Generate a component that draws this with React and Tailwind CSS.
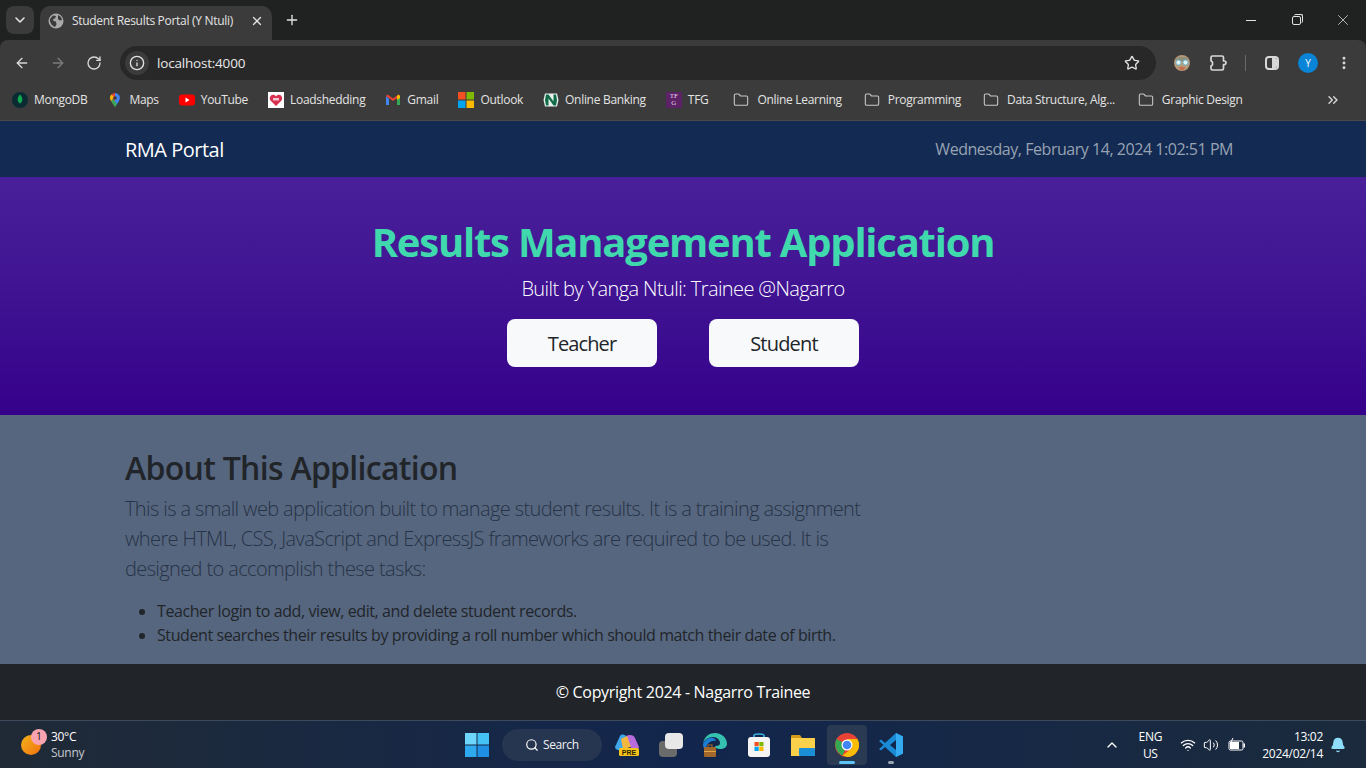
import React from "react";
import {
  ArrowLeft,
  ArrowRight,
  RotateCw,
  Info,
  Star,
  EllipsisVertical,
  ChevronDown,
  ChevronUp,
  ChevronsRight,
  Plus,
  X,
  Folder,
  Search,
  Wifi,
  Volume2,
  Bell,
} from "lucide-react";

const Bookmark = ({ icon, label, className = "", gap = "gap-1.5" }) => (
  <div className={`flex items-center ${gap} text-xs tracking-[-0.3px] text-[#e3e3e3] ${className}`}>
    <span className="flex h-4 w-4 items-center justify-center">{icon}</span>
    <span>{label}</span>
  </div>
);

const FolderIcon = () => <Folder className="h-4 w-4 text-[#c7c7c7]" strokeWidth={1.6} />;

const MongoIcon = () => (
  <svg viewBox="0 0 16 16" className="h-4 w-4">
    <circle cx="8" cy="8" r="8" fill="#0b2b33" />
    <path d="M8 2.500c2 2.200 2.600 4 2.200 6-.3 1.400-1.200 2.400-2.200 3-1-.6-1.900-1.600-2.200-3-.4-2 .2-3.800 2.200-6z" fill="#12a84f" />
  </svg>
);

const MapsIcon = () => (
  <svg viewBox="0 0 16 16" className="h-4 w-4">
    <path d="M8 1a5 5 0 0 0-4 8l4 6z" fill="#ea4335" />
    <path d="M8 1a5 5 0 0 1 4 8L8 15z" fill="#4285f4" />
    <path d="M4 9l4 6 2-3-4-5z" fill="#34a853" />
    <path d="M3 6a5 5 0 0 1 1.500-3.500L7 5 4 9z" fill="#fbbc04" />
    <circle cx="8" cy="6" r="1.800" fill="#3b3b3b" />
  </svg>
);

const YoutubeIcon = () => (
  <svg viewBox="0 0 16 16" className="h-4 w-4">
    <rect x="0" y="2.500" width="16" height="11" rx="3" fill="#f00" />
    <path d="M6.500 5.500l4 2.500-4 2.500z" fill="#fff" />
  </svg>
);

const LoadIcon = () => (
  <svg viewBox="0 0 16 16" className="h-4 w-4">
    <rect width="16" height="16" fill="#fff" />
    <path d="M8 14L2.500 8.500C.8 6 2.500 2.800 5 2.800c1.300 0 2.300.6 3 1.600.7-1 1.700-1.600 3-1.600 2.500 0 4.200 3.200 2.500 5.700z" fill="#d9304f" />
    <rect x="5" y="6" width="6" height="2.500" fill="#f7c5cf" />
  </svg>
);

const GmailIcon = () => (
  <svg viewBox="0 0 16 16" className="h-4 w-4">
    <path d="M1 4v9h3V7z" fill="#4285f4" />
    <path d="M15 4v9h-3V7z" fill="#34a853" />
    <path d="M1 4l7 5 7-5-1.500-1.500L8 6.500 2.500 2.500z" fill="#ea4335" />
    <path d="M12 4l1.500-1.500L15 4v2l-3 2z" fill="#fbbc04" />
  </svg>
);

const MicrosoftIcon = () => (
  <svg viewBox="0 0 16 16" className="h-4 w-4">
    <rect width="7.500" height="7.500" fill="#f25022" />
    <rect x="8.500" width="7.500" height="7.500" fill="#7fba00" />
    <rect y="8.500" width="7.500" height="7.500" fill="#00a4ef" />
    <rect x="8.500" y="8.500" width="7.500" height="7.500" fill="#ffb900" />
  </svg>
);

const NedbankIcon = () => (
  <svg viewBox="0 0 16 16" className="h-4 w-4">
    <path d="M2 1.500h12l1.500 6.500-1.500 6.500H2L.5 8z" fill="#e8f1ec" />
    <path d="M3 2.500h2.500l5 7v-7H13l1 5.500-1 5.500h-2.500l-5-7v7H3L2 8z" fill="#0f6b48" />
  </svg>
);

const TfgIcon = () => (
  <span className="flex h-4 w-4 flex-col items-center justify-center bg-[#5b2366] font-['Liberation_Serif',serif] text-[7px] leading-[7px] tracking-normal text-[#e6d8ea]">
    <span>TF</span>
    <span>G</span>
  </span>
);

const GlobeFilled = () => (
  <svg viewBox="0 0 16 16" className="h-4 w-4">
    <circle cx="8" cy="8" r="7.500" fill="#a9a9a9" />
    <path d="M2 6l3-3.500 3 .5-1 2.500-2 .5.500 2 2.500.5.500 3-1.500 2.500C4 13 1.500 9.500 2 6zM10 2l3 2 1 3-2.500.5L10 6z" fill="#3b3b3b" />
  </svg>
);

const ExtensionIcon = () => (
  <svg viewBox="0 0 18 18" className="h-[18px] w-[18px]" fill="none" stroke="#d8d8d8" strokeWidth="1.700" strokeLinejoin="round">
    <path d="M3.500 2h9.500a1.500 1.500 0 0 1 1.500 1.500V7h.7a1.800 1.800 0 0 1 0 3.600h-.7v3.900a1.500 1.500 0 0 1-1.500 1.500H3.500A1.500 1.500 0 0 1 2 14.500V12a2.200 2.200 0 0 0 1.500-2.500A2.200 2.200 0 0 0 2 7V3.500A1.500 1.500 0 0 1 3.500 2z" />
  </svg>
);

const ChromeBar = () => (
  <div className="flex h-10 items-end bg-[#202121]">
    <div className="mb-1.5 ml-1.5 flex h-7 w-7 items-center justify-center rounded-lg bg-[#3b3b3b]">
      <ChevronDown className="h-4 w-4 text-[#e3e3e3]" strokeWidth={2.4} />
    </div>
    <div className="ml-1.5 flex h-[34px] w-[232px] items-center rounded-t-[10px] bg-[#3b3b3b] pb-1 pl-2 pr-2">
      <GlobeFilled />
      <span className="ml-2 flex-1 text-xs tracking-[-0.3px] text-[#e3e3e3]">Student Results Portal (Y Ntuli)</span>
      <X className="h-3.5 w-3.5 text-[#e3e3e3]" strokeWidth={2.2} />
    </div>
    <Plus className="mb-3 ml-3 h-4 w-4 text-[#e3e3e3]" strokeWidth={2} />
    <div className="mb-[11px] ml-auto flex items-center">
      <span className="mr-[36px] h-px w-[10px] bg-[#e3e3e3]" />
      <span className="relative mr-[33px] mt-px h-[9px] w-[9px] rounded-[2px] border border-[#e3e3e3]">
        <span className="absolute -right-[3px] -top-[3px] h-[9px] w-[9px] rounded-[2px] border-r border-t border-[#e3e3e3]" />
      </span>
      <X className="mr-[14px] h-[18px] w-[18px] text-[#e3e3e3]" strokeWidth={1} />
    </div>
  </div>
);

const AddressBar = () => (
  <div className="flex h-[41px] items-start rounded-t-lg bg-[#3b3b3b] pl-3.5 pr-3 pt-1.5">
    <div className="flex h-[34px] items-center">
      <ArrowLeft className="h-4 w-4 text-[#d8d8d8]" strokeWidth={2} />
      <ArrowRight className="ml-5 h-4 w-4 text-[#7c7c7c]" strokeWidth={2} />
      <RotateCw className="ml-5 h-4 w-4 text-[#d8d8d8]" strokeWidth={2} />
      <div className="ml-[18px] flex h-[34px] w-[1036px] items-center rounded-full bg-[#282828] pl-[5px] pr-4">
        <span className="flex h-6 w-6 items-center justify-center rounded-full bg-[#3b3b3b]">
          <Info className="h-4 w-4 text-[#e3e3e3]" strokeWidth={2} />
        </span>
        <span className="ml-2 text-[13.5px] tracking-[-0.2px] text-[#e8e8e8]">localhost:4000</span>
        <Star className="ml-auto h-4 w-4 text-[#e3e3e3]" strokeWidth={2} />
      </div>
      <svg viewBox="0 0 18 18" className="ml-[17px] h-[18px] w-[18px]">
        <circle cx="9" cy="9" r="8" fill="#b99a78" />
        <path d="M3 5c2-3 10-3 12 0l-1 2H4z" fill="#8d8d7a" />
        <circle cx="5.500" cy="8.500" r="2.600" fill="#dff2f5" stroke="#66b3c4" />
        <circle cx="12.500" cy="8.500" r="2.600" fill="#dff2f5" stroke="#66b3c4" />
        <path d="M6 13h6l-1 3H7z" fill="#c86f52" />
      </svg>
      <span className="ml-[18px]">
        <ExtensionIcon />
      </span>
      <span className="ml-[18px] h-4 w-px bg-[#6a6a6a]" />
      <span className="ml-[19px] flex h-[14px] w-[14px] overflow-hidden rounded-sm border-2 border-[#d8d8d8]">
        <span className="ml-auto h-full w-1/2 bg-[#d8d8d8]" />
      </span>
      <span className="ml-[19px] flex h-5 w-5 items-center justify-center rounded-full bg-[#0a84d6] text-[10px] text-white">
        Y
      </span>
      <EllipsisVertical className="ml-[18px] h-4 w-4 text-[#d8d8d8]" strokeWidth={2.4} />
    </div>
  </div>
);

const Bookmarks = () => (
  <div className="flex h-10 items-center border-b border-[#4a4a4a] bg-[#3b3b3b] pb-px pl-3 pr-[25px]">
    <Bookmark icon={<MongoIcon />} label="MongoDB" />
    <Bookmark icon={<MapsIcon />} label="Maps" className="ml-5" />
    <Bookmark icon={<YoutubeIcon />} label="YouTube" className="ml-5" />
    <Bookmark icon={<LoadIcon />} label="Loadshedding" className="ml-5" />
    <Bookmark icon={<GmailIcon />} label="Gmail" className="ml-5" />
    <Bookmark icon={<MicrosoftIcon />} label="Outlook" className="ml-5" />
    <Bookmark icon={<NedbankIcon />} label="Online Banking" className="ml-5" />
    <Bookmark icon={<TfgIcon />} label="TFG" className="ml-5" />
    <Bookmark icon={<FolderIcon />} label="Online Learning" gap="gap-2" className="ml-[25px]" />
    <Bookmark icon={<FolderIcon />} label="Programming" gap="gap-2" className="ml-[22px]" />
    <Bookmark icon={<FolderIcon />} label="Data Structure, Alg..." gap="gap-2" className="ml-[22px]" />
    <Bookmark icon={<FolderIcon />} label="Graphic Design" gap="gap-2" className="ml-[23px]" />
    <ChevronsRight className="ml-auto h-4 w-4 text-[#d8d8d8]" strokeWidth={2} />
  </div>
);

const Navbar = () => (
  <nav className="flex h-14 items-center justify-between bg-[#132a52] pl-[125px] pr-[133px]">
    <span className="pt-0.5 text-xl tracking-[-0.5px] text-white">RMA Portal</span>
    <span className="text-base tracking-[-0.46px] text-[#97a3b3]">Wednesday, February 14, 2024 1:02:51 PM</span>
  </nav>
);

const Hero = () => (
  <section className="flex h-[238px] flex-col items-center bg-gradient-to-b from-[#4a1f9a] to-[#35008a] pt-[39px]">
    <h1 className="text-[40px] font-bold leading-[52px] tracking-[-1.23px] text-[#40d9ad]">
      Results Management Application
    </h1>
    <p className="mt-[5px] text-xl font-light leading-8 tracking-[-0.6px] text-white">
      Built by Yanga Ntuli: Trainee @Nagarro
    </p>
    <div className="mt-[14px] flex gap-[52px]">
      <button className="h-12 w-[150px] rounded-lg bg-[#f8f9fa] pt-0.5 text-xl tracking-[-0.9px] text-[#212529]">Teacher</button>
      <button className="h-12 w-[150px] rounded-lg bg-[#f8f9fa] pt-0.5 text-xl tracking-[-0.8px] text-[#212529]">Student</button>
    </div>
  </section>
);

const About = () => (
  <section className="h-[249px] bg-[#56667f] px-[125px] pt-[30px]">
    <h2 className="text-[32px] font-semibold leading-[46px] tracking-[-0.7px] text-[#212529]">About This Application</h2>
    <p className="mt-[3px] w-[750px] text-xl font-light leading-[30px] tracking-[-0.62px] text-[#273346]">
      This is a small web application built to manage student results. It is a training assignment where HTML, CSS,
      JavaScript and ExpressJS frameworks are required to be used. It is designed to accomplish these tasks:
    </p>
    <ul className="mt-[15px] list-disc pl-8 text-base leading-6 tracking-[-0.41px] text-[#212529]">
      <li>Teacher login to add, view, edit, and delete student records.</li>
      <li>Student searches their results by providing a roll number which should match their date of birth.</li>
    </ul>
  </section>
);

const Footer = () => (
  <footer className="flex h-14 items-center justify-center bg-[#212529] text-base tracking-[-0.32px] text-white">
    © Copyright 2024 - Nagarro Trainee
  </footer>
);

const TaskCell = ({ children, className = "" }) => (
  <div className={`relative flex h-12 w-11 items-center justify-center ${className}`}>{children}</div>
);

const Taskbar = () => (
  <div className="relative flex h-12 items-center justify-between border-t border-[#3c4a5c] bg-gradient-to-r from-[#202a36] via-[#12264d] to-[#1b2a3c] pl-[21px] pr-[20px]">
    <div className="flex items-center gap-[10px]">
      <div className="relative h-5 w-5 rounded-full bg-gradient-to-br from-[#f2b21c] to-[#f0710f]">
        <span className="absolute -right-[6px] -top-[6px] flex h-4 w-4 items-center justify-center rounded-full bg-[#f9a3b0] text-[11px] text-[#222]">
          1
        </span>
      </div>
      <div className="text-xs leading-4 tracking-[-0.3px]">
        <div className="text-white">30°C</div>
        <div className="text-[#c5c9cf]">Sunny</div>
      </div>
    </div>

    <div className="absolute left-[455px] top-0 flex h-full items-center">
      <TaskCell>
        <svg viewBox="0 0 24 24" className="h-6 w-6">
          <rect x="0" y="0" width="11.500" height="11.500" fill="#6fd6fb" />
          <rect x="12.500" y="0" width="11.500" height="11.500" fill="#45c2f5" />
          <rect x="0" y="12.500" width="11.500" height="11.500" fill="#2fa9ee" />
          <rect x="12.500" y="12.500" width="11.500" height="11.500" fill="#1e8fe3" />
        </svg>
      </TaskCell>
      <div className="ml-[3px] flex h-8 w-[100px] items-center rounded-full bg-[#263650] pl-[23px] text-xs tracking-[-0.4px] text-[#f0f0f0]">
        <Search className="mr-1 h-3.5 w-3.5 text-white" strokeWidth={2} />
        Search
      </div>
      <TaskCell className="ml-[3px]">
        <svg viewBox="0 0 26 26" className="h-[26px] w-[26px]">
          <path d="M1 15L6 4c1-2 4-2 6 0l-3 13c-1 2-8 2-8-2z" fill="#3fa7ea" />
          <path d="M12 4c4-2 8-1 9 2l4 9c0 2-4 3-7 2L12 8z" fill="#b76bdc" />
          <path d="M7 7l6-3 4 11-8 2z" fill="#f2b73f" />
          <rect x="5" y="16" width="20" height="8" rx="1.500" fill="#f6c21c" />
          <text x="15" y="22.500" textAnchor="middle" fontSize="7" fontWeight="700" fill="#2b2200" fontFamily="Liberation Sans, sans-serif">PRE</text>
        </svg>
      </TaskCell>
      <TaskCell>
        <span className="relative h-6 w-6">
          <span className="absolute bottom-0 left-0 h-4 w-[18px] rounded-sm bg-[#6b6b6b]" />
          <span className="absolute right-0 top-0 h-4 w-[18px] rounded-sm bg-[#e8e8e8]" />
        </span>
      </TaskCell>
      <TaskCell>
        <svg viewBox="0 0 26 26" className="h-[26px] w-[26px]">
          <path d="M1 12C2 4 8 1 13 1c7 0 12 5 12 11 0 3-3 5-7 5-3 0-5-1-5-3 2 0 5 0 5-3 0-3-3-6-7-6C6 5 2 8 1 12z" fill="#35c2b0" />
          <path d="M1 12c2-4 6-7 10-6 2 .5 3 2 3 3-6-1-11 4-10 10-2-2-3-4-3-7z" fill="#1c7fd6" />
          <rect x="2" y="15" width="12" height="10" rx="1" fill="#a2672a" />
          <rect x="6" y="13" width="4" height="2.500" fill="none" stroke="#a2672a" />
          <rect x="2" y="19" width="12" height="1" fill="#e3a64b" />
        </svg>
      </TaskCell>
      <TaskCell>
        <svg viewBox="0 0 24 26" className="h-[26px] w-6">
          <path d="M7 6V3.500C7 1.500 17 1.500 17 3.500V6" fill="none" stroke="#39b3e6" strokeWidth="1.600" />
          <rect x="1" y="5" width="22" height="20" rx="3" fill="#f4f4f4" />
          <rect x="7.500" y="10" width="4.200" height="4.200" fill="#f25022" />
          <rect x="12.300" y="10" width="4.200" height="4.200" fill="#7fba00" />
          <rect x="7.500" y="14.800" width="4.200" height="4.200" fill="#00a4ef" />
          <rect x="12.300" y="14.800" width="4.200" height="4.200" fill="#ffb900" />
        </svg>
      </TaskCell>
      <TaskCell>
        <svg viewBox="0 0 24 22" className="h-[22px] w-6">
          <path d="M0 2a1 1 0 0 1 1-1h8l2 3h12a1 1 0 0 1 1 1v3H0z" fill="#d59a17" />
          <rect x="0" y="4" width="24" height="18" rx="1" fill="#fbd14b" />
          <rect x="8" y="14" width="16" height="8" rx="1" fill="#1a8fd8" />
          <rect x="0" y="19" width="8" height="3" fill="#fbd14b" />
        </svg>
      </TaskCell>
      <TaskCell>
        <div className="flex h-10 w-10 items-center justify-center rounded-[4px] bg-[#2a3a53]">
          <svg viewBox="0 0 24 24" className="h-6 w-6">
            <circle cx="12" cy="12" r="12" fill="#ea4335" />
            <path d="M12 12L1.600 6a12 12 0 0 0 6 16.400z" fill="#34a853" />
            <path d="M12 6h10.400A12 12 0 0 1 12 24l-4.400-1.600 9.600-7.400z" fill="#fbbc04" />
            <circle cx="12" cy="12" r="5.500" fill="#fff" />
            <circle cx="12" cy="12" r="4.300" fill="#4285f4" />
          </svg>
        </div>
        <span className="absolute bottom-[5px] left-1/2 h-[3px] w-4 -translate-x-1/2 rounded-full bg-[#5cc4f5]" />
      </TaskCell>
      <TaskCell>
        <svg viewBox="0 0 24 24" className="h-6 w-6">
          <path d="M17 0l7 3.500v17L17 24 6 14l-4 3.500L0 16l4.500-4L0 8l2-1.500L6 10z" fill="#1a8ad4" />
          <path d="M17 0l7 3.500v17L17 24z" fill="#34aaf0" />
          <path d="M17 7l-6 5 6 5z" fill="#12264d" />
        </svg>
        <span className="absolute bottom-[5px] left-1/2 h-[3px] w-1.5 -translate-x-1/2 rounded-full bg-[#9aa4b2]" />
      </TaskCell>
    </div>

    <div className="flex items-center text-xs tracking-[-0.3px] text-white">
      <ChevronUp className="h-4 w-4 text-white" strokeWidth={2} />
      <div className="ml-[18px] w-[24px] text-center leading-[17px]">
        <div>ENG</div>
        <div>US</div>
      </div>
      <Wifi className="ml-[18px] h-4 w-4" strokeWidth={2} />
      <Volume2 className="ml-[7px] h-4 w-4" strokeWidth={1.5} />
      <svg viewBox="0 0 18 14" className="ml-[9px] h-[14px] w-[18px]" fill="none">
        <rect x="1" y="3" width="14" height="9" rx="1.500" stroke="#fff" />
        <rect x="2" y="4" width="9" height="7" fill="#fff" />
        <rect x="15.500" y="5.500" width="1.500" height="4" fill="#fff" />
        <path d="M5 0L2 6h3l-1 4" stroke="#fff" strokeWidth="1" />
      </svg>
      <div className="ml-[16px] text-right leading-[17px]">
        <div>13:02</div>
        <div>2024/02/14</div>
      </div>
      <Bell className="ml-[7px] h-4 w-4 fill-[#8fdcfb] text-[#8fdcfb]" />
    </div>
  </div>
);

export default function App() {
  return (
    <div className="flex h-[768px] w-[1366px] flex-col overflow-hidden bg-[#202121] font-['Open_Sans','Noto_Sans',sans-serif]">
      <ChromeBar />
      <AddressBar />
      <Bookmarks />
      <Navbar />
      <Hero />
      <About />
      <Footer />
      <Taskbar />
    </div>
  );
}
